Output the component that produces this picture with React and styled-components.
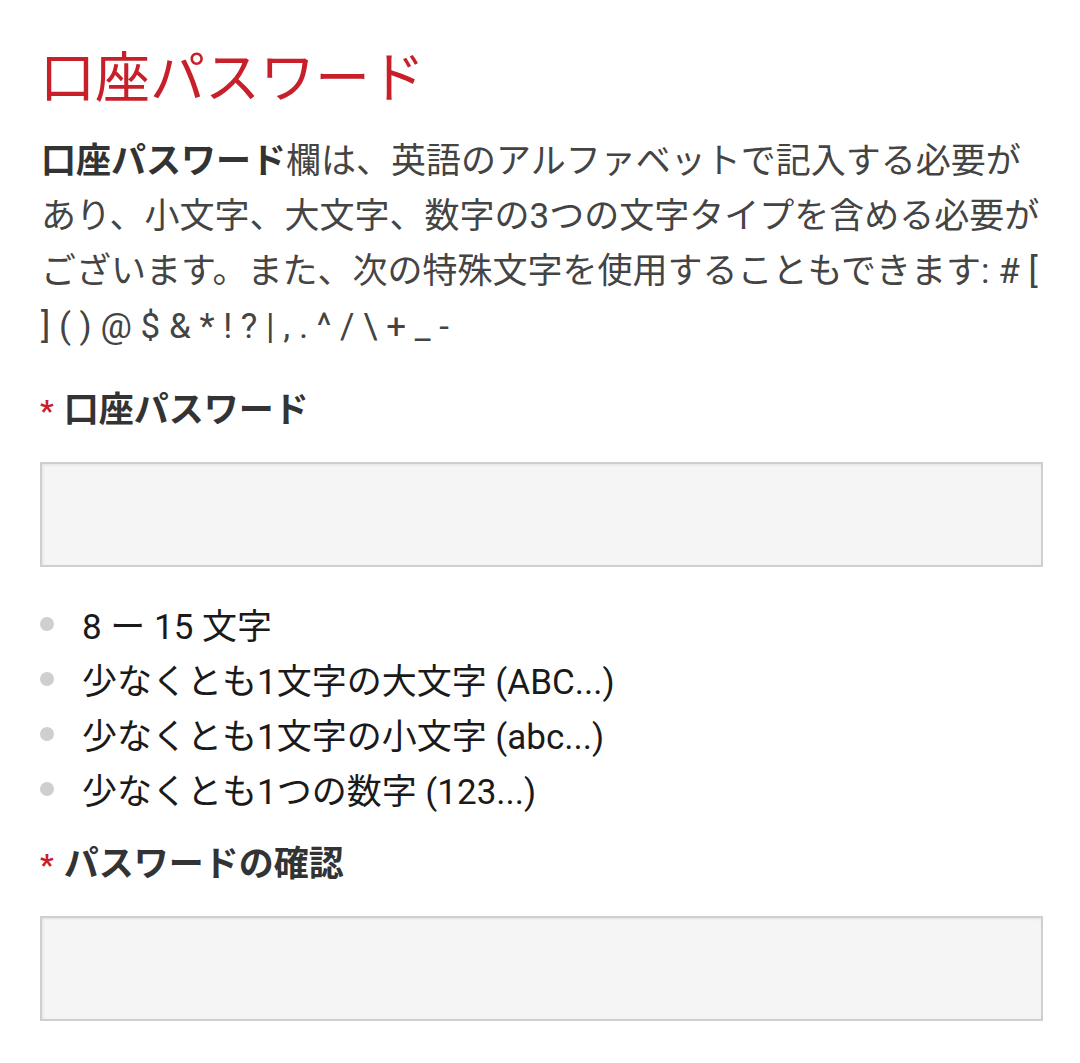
import styled, { createGlobalStyle } from "styled-components";

const GlobalStyle = createGlobalStyle`
  html, body {
    margin: 0;
    padding: 0;
    background: #fff;
  }
  body {
    font-family: Roboto, "Noto Sans CJK JP", sans-serif;
  }
`;

const Page = styled.div`
  width: 1004px;
  padding: 40px 36px 40px 40px;
`;

const Title = styled.h1`
  margin: 0;
  color: #c8202b;
  font-size: 55px;
  font-weight: 400;
  line-height: 76px;
`;

const Intro = styled.p`
  width: 1008px;
  margin: 18px 0 0 1px;
  color: #444;
  font-size: 35px;
  line-height: 55px;

  strong {
    font-weight: 700;
    color: #333;
  }
`;

const Label = styled.div`
  margin-top: ${(p) => p.$top}px;
  display: flex;
  align-items: center;
  gap: 10px;
  color: #333;
  font-size: 35px;
  font-weight: 700;
  line-height: 48px;
`;

const Star = styled.span`
  color: #c8202b;
  font-size: 30px;
`;

const Field = styled.input`
  display: block;
  box-sizing: border-box;
  width: 1003px;
  height: 105px;
  margin-top: 27px;
  background: #f5f5f5;
  border: 2px solid #cfcfcf;
  box-shadow: inset 1px 1px 3px rgba(0, 0, 0, 0.08);
  outline: none;
  font-size: 32px;
`;

const Rules = styled.ul`
  list-style: none;
  margin: 29px 0 0;
  padding: 0;
`;

const Rule = styled.li`
  display: flex;
  align-items: center;
  height: 55px;
  color: #1a1a1a;
  font-size: 35px;

  &::before {
    content: "";
    width: 14px;
    height: 14px;
    border-radius: 50%;
    background: #cfcfcf;
    margin: 0 28px 0 0;
  }
`;

const rules = [
  "8 ー 15 文字",
  "少なくとも1文字の大文字 (ABC...)",
  "少なくとも1文字の小文字 (abc...)",
  "少なくとも1つの数字 (123...)",
];

export default function App() {
  return (
    <Page>
      <GlobalStyle />
      <Title>口座パスワード</Title>
      <Intro>
        <strong>口座パスワード</strong>
        欄は、英語のアルファベットで記入する必要があり、小文字、大文字、数字の3つの文字タイプを含める必要がございます。また、次の特殊文字を使用することもできます:
        # [ ] ( ) @ $ & * ! ? | , . ^ / \ + _ -
      </Intro>
      <Label $top={33}>
        <Star>*</Star>口座パスワード
      </Label>
      <Field type="password" />
      <Rules>
        {rules.map((r) => (
          <Rule key={r}>{r}</Rule>
        ))}
      </Rules>
      <Label $top={25}>
        <Star>*</Star>パスワードの確認
      </Label>
      <Field type="password" />
    </Page>
  );
}
